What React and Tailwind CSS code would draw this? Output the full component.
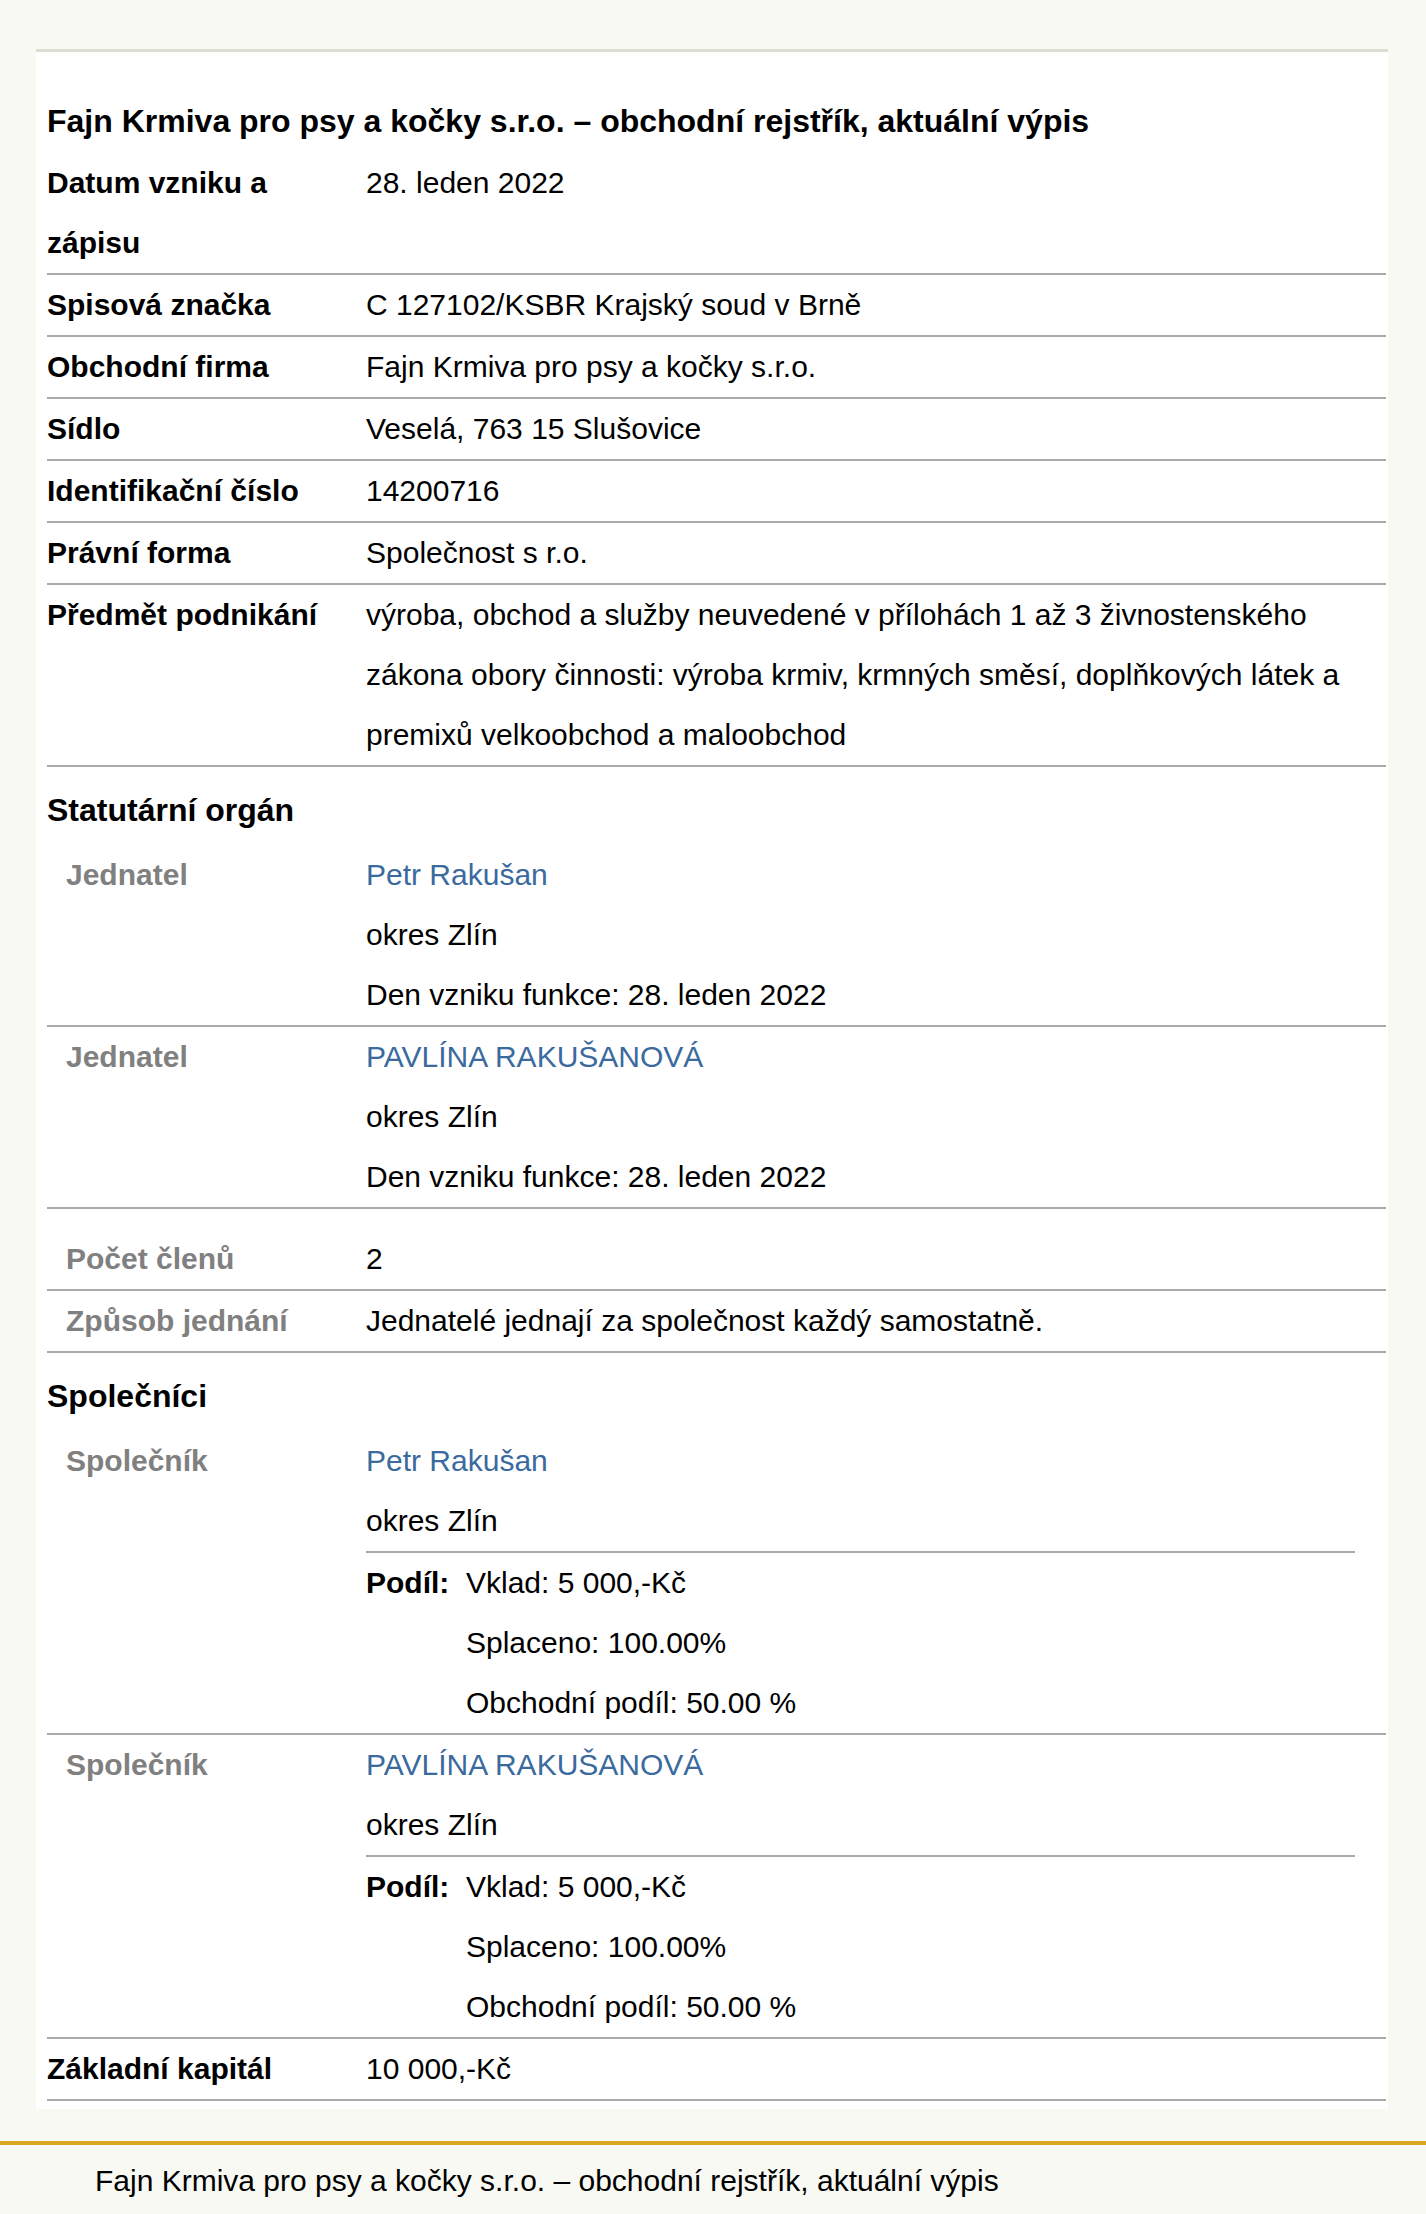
import React from "react";

const FONT = { fontFamily: '"Liberation Sans", Arial, Helvetica, sans-serif' };

function Row({ label, children, nested = false }) {
  return (
    <div className="grid grid-cols-[319px_1fr] border-b-2 border-[#aaaaaa]">
      <div
        className={
          nested
            ? "pl-[19px] font-bold text-[#808080]"
            : "font-bold text-black"
        }
      >
        {label}
      </div>
      <div className="text-black">{children}</div>
    </div>
  );
}

function Heading({ children }) {
  return (
    <div className="pt-[13px] pb-[5px] text-[32px] font-bold leading-[60px] text-black">
      {children}
    </div>
  );
}

function Link({ children }) {
  return <div className="text-[#3a6a9e]">{children}</div>;
}

function Podil() {
  return (
    <div className="mr-[31px] grid grid-cols-[100px_1fr] border-t-2 border-[#aaaaaa]">
      <div className="font-bold">Podíl:</div>
      <div>
        <div>Vklad: 5 000,-Kč</div>
        <div>Splaceno: 100.00%</div>
        <div>Obchodní podíl: 50.00 %</div>
      </div>
    </div>
  );
}

export default function App() {
  return (
    <div
      className="min-h-[2214px] bg-[#f9f9f4] pt-[49px] text-[30px] leading-[60px] text-black"
      style={FONT}
    >
      <div className="ml-[36px] mr-[38px] border-t-[3px] border-[#dcdcd1] bg-white pl-[11px] pr-[2px] pt-[37px] pb-[8px]">
        <h1 className="text-[32px] font-bold leading-[64px]">
          Fajn Krmiva pro psy a kočky s.r.o. – obchodní rejstřík, aktuální výpis
        </h1>

        <Row label="Datum vzniku a zápisu">28. leden 2022</Row>
        <Row label="Spisová značka">C 127102/KSBR Krajský soud v Brně</Row>
        <Row label="Obchodní firma">Fajn Krmiva pro psy a kočky s.r.o.</Row>
        <Row label="Sídlo">Veselá, 763 15 Slušovice</Row>
        <Row label="Identifikační číslo">14200716</Row>
        <Row label="Právní forma">Společnost s r.o.</Row>
        <Row label="Předmět podnikání">
          výroba, obchod a služby neuvedené v přílohách 1 až 3 živnostenského
          zákona obory činnosti: výroba krmiv, krmných směsí, doplňkových látek a
          premixů velkoobchod a maloobchod
        </Row>

        <Heading>Statutární orgán</Heading>
        <Row label="Jednatel" nested>
          <Link>Petr Rakušan</Link>
          <div>okres Zlín</div>
          <div>Den vzniku funkce: 28. leden 2022</div>
        </Row>
        <Row label="Jednatel" nested>
          <Link>PAVLÍNA RAKUŠANOVÁ</Link>
          <div>okres Zlín</div>
          <div>Den vzniku funkce: 28. leden 2022</div>
        </Row>
        <div className="h-[20px]" />
        <Row label="Počet členů" nested>2</Row>
        <Row label="Způsob jednání" nested>
          Jednatelé jednají za společnost každý samostatně.
        </Row>

        <Heading>Společníci</Heading>
        <Row label="Společník" nested>
          <Link>Petr Rakušan</Link>
          <div>okres Zlín</div>
          <Podil />
        </Row>
        <Row label="Společník" nested>
          <Link>PAVLÍNA RAKUŠANOVÁ</Link>
          <div>okres Zlín</div>
          <Podil />
        </Row>
        <Row label="Základní kapitál">10 000,-Kč</Row>
      </div>

      <div className="mt-[32px] border-t-4 border-[#daa520] pl-[95px] pt-[6px] pb-[4px]">
        Fajn Krmiva pro psy a kočky s.r.o. – obchodní rejstřík, aktuální výpis
      </div>
    </div>
  );
}
